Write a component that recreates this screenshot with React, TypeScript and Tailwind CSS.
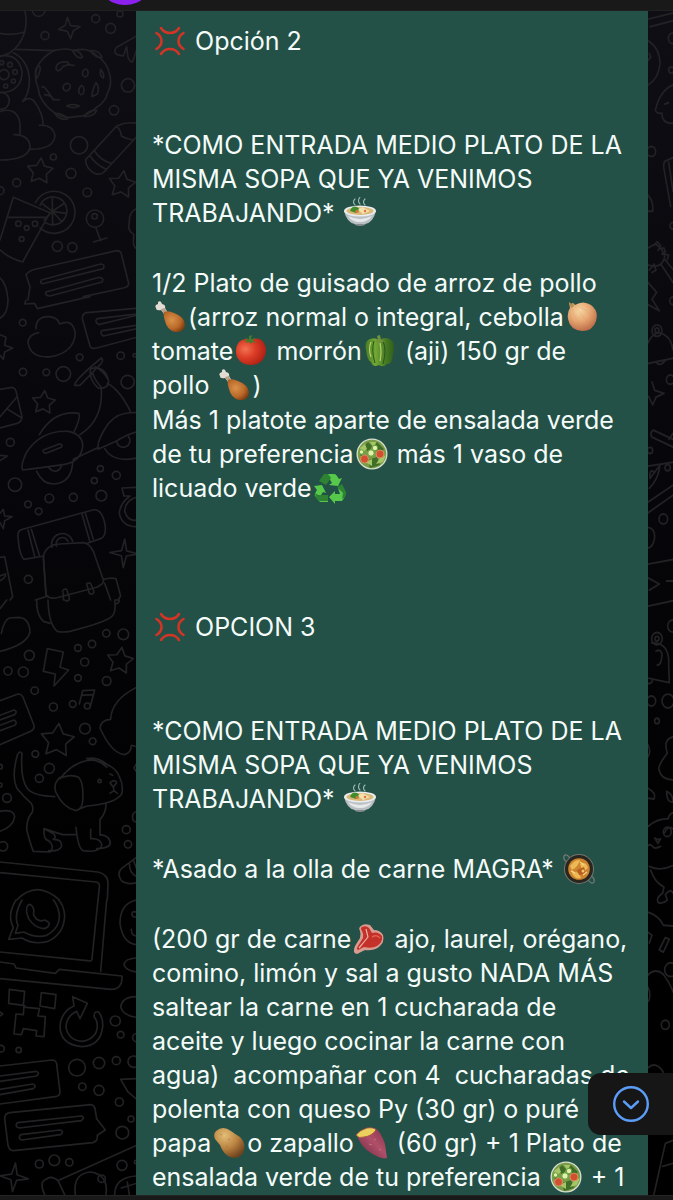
import type { ReactNode } from "react";

type Circle = [number, number, number];

function star(cx: number, cy: number, r: number, turn = 0, points = 5, inner = 0.52) {
  const out: string[] = [];
  for (let i = 0; i < points * 2; i++) {
    const radius = i % 2 === 0 ? r : r * inner;
    const a = ((turn - 90 + (i * 180) / points) * Math.PI) / 180;
    out.push(`${(cx + radius * Math.cos(a)).toFixed(1)} ${(cy + radius * Math.sin(a)).toFixed(1)}`);
  }
  return `M${out.join("L")}Z`;
}

function Doodles({ place, paths, circles }: { place: string; paths: string[]; circles: Circle[] }) {
  return (
    <g transform={place}>
      {paths.map((d, i) => (
        <path key={i} d={d} />
      ))}
      {circles.map(([x, y, r], i) => (
        <circle key={i} cx={x} cy={y} r={r} />
      ))}
    </g>
  );
}

const leftSections: { place: string; paths: string[]; circles: Circle[] }[] = [
  {
    place: "translate(0 -11) scale(.3333)",
    paths: [
      "M74 30C86 78 72 130 30 158L0 170M0 100Q35 108 75 96",
      "M45 148Q100 150 165 152M40 158Q84 180 88 236Q90 280 68 304Q92 284 108 312Q128 340 130 376M118 376Q160 374 165 408Q160 448 92 448M0 335Q50 318 60 370L60 402M42 404Q90 404 90 444Q80 480 0 480",
      "M0 168Q56 160 66 215Q66 265 20 276L0 278M0 276Q28 280 28 304Q24 328 0 328",
      "M112 200Q126 172 160 152Q200 142 222 152Q262 140 290 166Q322 188 328 220Q338 252 322 280Q318 304 290 322Q262 350 226 350Q190 358 160 336Q118 306 114 262Q100 230 112 200",
      "M110 236Q100 210 116 196Q128 204 110 236M270 152Q296 148 306 172Q290 176 270 152M218 152Q236 146 248 172Q232 180 218 152M168 206Q168 184 204 186Q212 194 188 200Q180 214 172 212ZM202 194L222 196M126 262Q130 250 160 300M134 284Q158 288 160 298L178 300M200 318Q218 310 238 318Q220 328 200 318M164 340Q190 340 204 356Q180 364 164 340M252 350Q266 328 290 332Q282 350 252 350M288 248Q300 262 292 282L276 290Q276 270 288 248",
      "M256 207Q266 208 264 224Q256 236 248 226Q246 210 256 207M302 208Q314 220 310 234Q298 228 302 208M200 250Q214 250 210 264Q200 280 190 268Q186 256 200 250M244 256Q256 262 250 280Q242 290 236 276Q236 262 244 256",
      "M202 52L212 77L240 80L220 92L212 116L202 94L176 88L196 76Z",
      "M410 108L350 142Q338 156 352 164L370 168L380 140L384 172Q392 190 398 184L410 150",
      "M258 478L350 378Q380 364 410 370M258 478Q254 500 280 518Q300 528 312 516L410 410M272 470Q290 496 320 508M284 454Q302 482 334 490M350 380Q362 388 364 408Q380 418 400 420",
      star(120, 514, 40, 5), star(366, 554, 42, 8),
      "M40 592L150 638L68 786Q28 776 0 750M40 592L0 720M24 652H142",
      "M106 608A63 63 0 1 1 120 684M120 616A42 42 0 1 1 136 668M157 596V634L190 612M157 634L198 640M157 634L184 664M157 634L158 674M157 634L132 660M157 634L128 612",
      "M288 684L302 722M280 726L320 714",
      "M410 626Q386 636 388 668Q380 690 402 704Q396 740 410 746",
      "M84 900L90 860L78 824Q88 812 106 808L350 752Q362 752 364 762L386 850Q386 862 370 864L250 890M124 840L302 792Q316 792 310 806L134 850Q118 854 124 840M138 876L298 832Q314 834 306 846L150 888Q134 888 138 876M0 834Q20 850 24 900",
    ],
    circles: [[116, 30, 19], [287, 56, 12], [332, 85, 15], [135, 107, 12], [360, 42, 9], [12, 224, 15], [5, 188, 6], [30, 194, 7], [45, 216, 7], [40, 243, 6], [17, 258, 6], [384, 256, 20], [342, 331, 14], [237, 436, 26], [160, 471, 9], [213, 520, 15], [262, 577, 13], [50, 548, 12], [0, 572, 12], [55, 671, 8], [80, 684, 7], [105, 671, 8], [65, 717, 7], [285, 656, 26], [284, 649, 8], [172, 739, 15], [217, 742, 14]],
  },
  {
    place: "translate(0 289) scale(.3333)",
    paths: [
      "M0 55Q24 40 24 0M78 0L74 12L104 10L112 26L270 -10",
      "M410 25L260 38Q244 42 248 60L270 138Q272 148 290 144L410 112M410 42L292 56Q282 64 296 74L410 46M410 76L306 92Q298 100 310 108L410 86",
      "M108 86Q108 48 148 50Q176 54 178 72Q220 54 226 102Q220 158 154 170Q90 176 84 126Q88 102 116 98",
      "M0 104L18 112L14 136L38 144L14 156L10 178L0 166M0 268L36 262Q48 264 50 282L66 350Q66 364 52 370L0 384M0 350L50 292M20 326L62 352",
      star(131, 308, 36, 5),
      "M224 256Q222 242 304 174Q312 180 302 192L240 256ZM272 206Q264 234 294 264Q324 268 326 244Q316 194 272 206M286 200Q312 214 324 238M278 220Q286 244 306 264",
      "M304 266Q310 360 240 404M322 250Q360 270 392 336M118 404Q162 330 236 340Q244 348 222 396M68 510Q60 500 78 460Q120 390 206 394Q250 404 248 440Q242 486 190 494Q120 504 68 510M130 450L178 432Q190 432 184 442L138 460Q128 460 130 450M220 478L296 442M110 514Q128 552 160 552Q216 550 218 484M146 502Q154 514 168 514Q184 508 184 494",
      "M294 448Q290 420 326 370Q356 334 410 338M294 448L348 424Q380 404 410 396M314 446Q340 490 410 474M350 424A20 20 0 1 0 386 410",
      "M72 778Q58 766 54 710Q52 690 68 688L278 630Q308 624 316 680Q318 710 302 716L262 730M72 778L132 768M84 690L104 770M94 688L118 766M246 642L270 726M256 640L280 718",
      "M156 742A30 30 0 0 1 218 724M170 738A18 18 0 0 1 204 724M130 768Q138 734 180 732L250 728Q268 730 280 754L310 840Q314 850 290 862L168 894Q138 896 138 880ZM310 838L332 834L348 836L362 888L354 900M314 850L332 900M106 900L144 888",
      "M188 876Q188 866 200 868L208 892V900M190 880L190 900M260 852Q262 848 272 850L282 876Q278 886 268 880ZM130 770L138 888",
      star(372, 760, 43, 3, 4, 0.25),
      "M410 562L366 564L372 588L390 588Q360 610 358 640Q366 680 410 680M410 592Q376 600 374 634Q384 666 410 660",
      "M0 466L22 468L0 482M0 640L10 628L14 648L36 650L14 662L10 686L0 668M0 772L14 770L38 890L30 900M0 828L16 822Q20 832 0 842",
    ],
    circles: [[68, 68, 10], [239, 172, 10], [362, 167, 11], [69, 216, 11], [139, 217, 10], [190, 222, 22], [383, 246, 20], [404, 166, 5], [31, 427, 12], [45, 554, 20], [301, 506, 9], [349, 526, 12], [283, 542, 9], [148, 595, 13], [220, 592, 12], [304, 587, 16], [84, 613, 10], [116, 634, 10], [85, 838, 12]],
  },
  {
    place: "translate(0 589) scale(.3333)",
    paths: [
      "M110 0Q108 42 130 64L150 70M144 0Q146 74 172 94Q186 98 210 94Q330 64 340 44Q348 30 344 0M344 0L358 0Q358 10 346 12M194 0Q200 6 206 0",
      "M0 26L20 0M0 154Q82 134 90 96Q88 54 56 52L28 54Q12 60 4 100",
      "M142 146L190 156L180 202L206 210L162 258L166 222L130 214Z",
      star(360, 183, 41, 8), star(172, 422, 52, 5),
      "M0 302L54 282Q66 282 70 294L102 376Q104 388 92 394L0 434M0 346L42 330Q54 334 44 344L0 360M0 376L42 360Q54 368 44 376L0 392",
      "M238 312L248 272L284 270L272 316M244 286L280 284",
      "M410 262Q334 300 332 358Q302 360 300 384Q334 460 374 464Q394 458 394 436L410 440M410 490L402 504L410 516",
      "M52 466Q58 450 66 460Q60 540 84 568Q102 588 164 590M52 466Q34 530 50 564Q72 592 94 610Q102 624 96 638Q80 656 80 688Q90 730 100 754L150 756Q166 740 146 722Q130 720 132 686L188 704H226M132 686L162 702Q170 712 160 718Q188 718 184 740Q176 756 146 752",
      "M180 536Q224 480 280 480Q346 494 358 530Q370 552 366 580Q350 610 262 618L240 626M180 532Q158 552 168 578Q190 624 228 632Q246 628 248 604Q252 550 236 532Q214 522 188 532ZM260 476Q296 468 326 498M270 478Q304 482 320 502",
      "M228 682Q234 746 250 752Q300 760 306 734Q300 714 272 716V688M318 612Q318 640 300 658V706M300 704Q334 708 330 734Q320 746 290 746",
      "M330 548Q346 536 350 548L340 562ZM340 562L342 572L330 580M342 572L352 580M330 522L338 526",
      "M0 634Q40 626 44 650Q40 680 0 694M0 786L294 816Q326 824 324 852L322 900M0 818L288 846Q300 848 298 862L294 900M50 900Q110 838 178 900",
      "M410 772L364 806Q350 820 364 842Q382 856 410 848M388 790Q388 820 410 830M400 780L410 806M410 634Q392 640 400 662L410 668",
    ],
    circles: [[319, 100, 11], [370, 103, 16], [276, 132, 11], [234, 144, 10], [88, 166, 15], [254, 186, 12], [24, 213, 12], [70, 216, 15], [234, 234, 10], [320, 243, 13], [104, 272, 11], [160, 321, 12], [218, 312, 10], [262, 318, 9], [255, 386, 16], [278, 424, 10], [106, 462, 10], [148, 505, 15], [118, 535, 12], [299, 543, 5], [21, 594, 13], [379, 689, 12], [384, 733, 11], [9, 739, 14], [0, 500, 7], [0, 555, 6]],
  },
  {
    place: "translate(0 889) scale(.3333)",
    paths: [
      "M48 0Q20 46 40 82L26 118L66 114Q100 136 144 124Q192 102 194 48Q192 16 176 0M66 0Q40 46 54 76L46 100L72 96Q108 116 140 106Q180 84 178 44Q174 16 160 0",
      "M84 16Q92 8 100 24L102 36Q96 42 110 58Q120 64 128 62Q136 56 148 70Q146 84 130 86Q104 84 86 56Q74 28 84 16Z",
      "M294 0L276 176Q276 186 262 182L0 156M320 0L302 214M0 186L42 192L48 204L166 220L178 208L366 228Q368 268 334 268L0 236",
      "M28 268L74 274L70 316L26 310ZM124 278L168 284L164 326L120 318ZM72 316L78 322L118 326L114 348L136 350L132 410L108 408L110 392L70 386L64 404L42 402L48 342L70 344Z",
      "M218 290L262 310L240 356L230 334Q198 350 198 382Q206 422 248 424Q292 416 292 376Q290 358 282 350Q282 332 296 336Q310 354 308 380Q302 438 246 440Q180 434 180 378Q184 334 222 318Z",
      "M0 498L156 480Q168 480 170 492L180 576Q180 588 166 590L0 612M0 528L108 514Q122 518 110 528L0 544M0 568L98 552Q112 556 100 566L0 584",
      "M30 638L272 614Q284 614 286 632L290 656L316 690L292 706Q294 724 278 728L40 752Q28 752 24 736L14 656Q14 640 30 638M52 668L244 648Q256 652 244 662L58 684Q42 680 52 668M62 704L180 690Q194 694 182 704L66 720Q52 716 62 704",
      star(42, 832, 43, 6, 4, 0.28),
      "M410 736L178 840M134 884Q116 846 138 838Q154 824 174 842L194 884M226 884Q218 820 272 816Q326 824 318 884M344 884Q344 832 410 828M364 864L410 850M382 846L388 884",
      "M410 0Q360 10 360 70Q368 130 410 134M410 174Q374 176 372 194Q378 212 410 216M410 290Q366 290 362 322Q370 348 410 352M410 536L362 538L384 576L410 598M394 88Q394 108 410 108M0 336L8 342L0 348",
    ],
    circles: [[404, 43, 8], [346, 363, 15], [362, 404, 10], [410, 413, 12], [3, 446, 10], [56, 450, 8], [231, 503, 25], [297, 489, 17], [349, 482, 12], [401, 485, 17], [247, 560, 11], [297, 571, 15], [358, 606, 12], [393, 657, 9], [367, 698, 19], [163, 781, 16], [118, 792, 12], [208, 787, 11], [305, 836, 11], [366, 796, 15], [408, 786, 5]],
  },
];

const rightSections: { place: string; paths: string[]; circles: Circle[] }[] = [
  {
    place: "translate(-88 -11) scale(.3333 .3827)",
    paths: [
      "M264 50L339 34M270 70L339 54M264 106Q300 126 300 166Q296 206 264 222M268 140L272 150L264 158",
      "M339 222Q300 236 286 288Q290 298 306 296Q306 324 339 322M314 272L326 268M339 412L318 420Q308 424 312 442L332 540M326 424L339 500M264 510Q282 528 278 552H264",
      "M264 648L286 638Q310 650 314 672Q304 704 264 692M282 640L292 632L302 642L294 654M300 650L312 648L316 658L306 664M310 664L326 666L322 678M312 676L339 704M304 692L339 738M268 706L282 690L288 706L276 712",
      "M264 738L290 764L276 782L298 812L264 796M264 896Q278 868 302 870Q334 880 339 914M264 950L339 936M288 946Q300 960 316 942",
      "M276 998L284 1020L312 1028L288 1038L278 1058L266 1036M339 1148L280 1124Q268 1132 276 1142L339 1168M327 1148L339 1132M339 1208L264 1218M300 1214Q296 1252 268 1276M280 1232Q268 1226 270 1250L296 1220",
      "M339 1268L264 1312M339 1294L264 1340M264 1378Q284 1380 284 1404Q280 1430 264 1432M339 1462L264 1474M264 1510L298 1526L268 1542M320 1518H339",
    ],
    circles: [[339, 100, 14], [334, 183, 8], [274, 396, 13], [339, 590, 9], [339, 786, 10], [291, 864, 15], [291, 863, 6], [331, 992, 12], [270, 1177, 8], [323, 1222, 8], [310, 1356, 13]],
  },
  {
    place: "translate(-88 589) scale(.3333 .3827)",
    paths: [
      "M264 16L339 2M275 112Q330 110 326 170L328 216L264 204M278 206Q276 220 264 218M288 134Q302 126 306 142Q304 172 292 170",
      "M339 358Q308 364 322 400Q300 424 296 440Q302 470 339 470M264 378Q274 396 264 410M264 492Q290 504 282 520L264 518M320 500Q340 508 339 528Q320 530 320 500",
      "M264 592Q292 570 324 572Q328 558 339 556M314 608Q322 588 339 598M264 642Q270 636 278 644Q284 652 302 644M284 622Q294 628 302 624L294 636ZM268 696Q300 710 339 694M272 706Q284 738 312 750L308 766Q288 778 294 790Q308 796 322 784L316 770Q332 752 339 766",
      "M264 816Q296 824 310 850L339 852M264 868L276 876L268 896M316 882L328 886L310 920L298 914ZM264 980Q286 960 310 978Q330 1000 339 1024M264 1012Q274 1030 266 1048M264 1222Q290 1204 310 1234",
      "M280 1560L316 1420L339 1412M308 1480L339 1472",
    ],
    circles: [[291, 101, 16], [291, 101, 6], [339, 68, 16], [274, 264, 13], [324, 264, 18], [291, 316, 7], [322, 606, 12], [332, 966, 18], [316, 1110, 12]],
  },
];

function Wallpaper({ sections }: { sections: typeof leftSections }) {
  return (
    <svg aria-hidden="true" className="absolute inset-0 h-full w-full" fill="none" stroke="#222225" strokeWidth="5" strokeLinecap="round" strokeLinejoin="round">
      {sections.map((s, i) => (
        <Doodles key={i} {...s} />
      ))}
    </svg>
  );
}

function Emoji({ label, children }: { label: string; children: ReactNode }) {
  return (
    <svg role="img" aria-label={label} viewBox="0 0 34 32" className="inline-block h-8 w-9 align-[-7px]">
      {children}
    </svg>
  );
}

function Anger() {
  return (
    <Emoji label="Enojo">
      <g fill="none" stroke="#d23425" strokeWidth="2.6" strokeLinecap="round">
        <path d="M8 3Q11 8 17 8Q23 8 26 3" />
        <path d="M8 29Q11 24 17 24Q23 24 26 29" />
        <path d="M3.500 8Q8.500 11 8.500 16Q8.500 21 3.500 24" />
        <path d="M30.500 8Q25.500 11 25.500 16Q25.500 21 30.500 24" />
      </g>
    </Emoji>
  );
}

function Soup() {
  return (
    <Emoji label="Plato de sopa">
      <g fill="none" stroke="#9eb9b5" strokeWidth="1.1" strokeLinecap="round">
        <path d="M12 8Q9 5 12 2M17 7Q14 4 17 0M22 8Q19 5 22 2" />
      </g>
      <path d="M10 24H24L22 28Q17 30 12 28Z" fill="#858b90" />
      <path d="M1 14Q4 26 12 27H22Q30 26 33 14Z" fill="#b9bfc3" />
      <path d="M5 19Q17 25 29 19Q25 25 17 25Q9 25 5 19Z" fill="#e6e9ea" />
      <ellipse cx="17" cy="14" rx="16" ry="5.500" fill="#e9eced" />
      <ellipse cx="17" cy="14" rx="13.500" ry="3.900" fill="#d9b878" />
      <path d="M7 14Q9 8 14 10L18 13L13 16Z" fill="#438c2e" />
      <path d="M15 13Q18 8 23 12L27 14L20 17Z" fill="#f4dfad" />
      <circle cx="14" cy="14.500" r="1.500" fill="#e27931" />
      <circle cx="22" cy="14" r="1.200" fill="#df7036" />
    </Emoji>
  );
}

function Drumstick() {
  return (
    <Emoji label="Pata de pollo">
      <defs>
        <radialGradient id="drumstick" cx=".38" cy=".42" r=".7">
          <stop stopColor="#d9924a" />
          <stop offset=".6" stopColor="#b96828" />
          <stop offset="1" stopColor="#78370f" />
        </radialGradient>
      </defs>
      <path d="M5 1Q8-1 9 3Q13 4 12 7L15 12L12 14L8 9Q3 10 3 7Q1 4 5 3Z" fill="#e3dcd4" />
      <path d="M8 8L12 7L14 12L11 13Z" fill="#b9a08b" />
      <path d="M11 11Q15 9 21 12Q32 16 32 24Q31 32 22 31Q14 29 12 20Q10 14 11 11Z" fill="url(#drumstick)" />
    </Emoji>
  );
}

function Onion() {
  return (
    <Emoji label="Cebolla">
      <defs>
        <radialGradient id="onion" cx=".4" cy=".3" r=".75">
          <stop stopColor="#f7d8a4" />
          <stop offset=".5" stopColor="#e6a672" />
          <stop offset="1" stopColor="#b96543" />
        </radialGradient>
      </defs>
      <path d="M4 1L6 3L8 2L10 4Q18-1 26 4Q34 10 31 20Q28 30 17 30Q5 29 3 18Q2 11 5 7Z" fill="url(#onion)" />
      <g fill="none" stroke="#d39560" strokeWidth=".5" opacity=".5">
        <path d="M6 5Q3 18 14 29M7 4Q9 20 20 29M8 4Q19 14 25 27M9 4Q24 8 30 20" />
      </g>
      <path d="M4 1L6 3L8 2L9 5L6 7Z" fill="#b58e50" />
    </Emoji>
  );
}

function Tomato() {
  return (
    <Emoji label="Tomate">
      <defs>
        <radialGradient id="tomato" cx=".32" cy=".4" r=".75">
          <stop stopColor="#f17251" />
          <stop offset=".45" stopColor="#dc3c25" />
          <stop offset="1" stopColor="#a51c12" />
        </radialGradient>
      </defs>
      <path d="M17 5Q25 1 30 8Q34 15 30 23Q26 30 17 30Q7 30 3 22Q0 13 5 7Q10 2 17 5Z" fill="url(#tomato)" />
      <path d="M15 5L11 2L13 5L8 6L13 6L11 8L15 7L17 9L18 7L22 8L19 5L22 3L17 4L18 0L15 1Z" fill="#477b2b" />
    </Emoji>
  );
}

function Pepper() {
  return (
    <Emoji label="Morrón">
      <defs>
        <linearGradient id="pepper">
          <stop stopColor="#4a7d22" />
          <stop offset=".35" stopColor="#72a735" />
          <stop offset=".7" stopColor="#477b24" />
          <stop offset="1" stopColor="#315e1b" />
        </linearGradient>
      </defs>
      <path d="M16 5Q23 1 28 5Q33 8 30 19Q29 30 24 29Q20 33 16 30Q10 33 8 27Q4 25 3 15Q1 6 7 4Q12 2 16 5Z" fill="url(#pepper)" />
      <path d="M11 6Q8 15 12 28M20 6Q24 15 20 29" fill="none" stroke="#28551a" strokeWidth="1" />
      <path d="M8 7Q5 14 8 22M17 8Q19 17 17 26" fill="none" stroke="#b5cd71" strokeWidth="1.200" />
      <path d="M12 6L15 5L14 1L17 0L18 5L22 6L17 8Z" fill="#72913d" />
    </Emoji>
  );
}

function Salad() {
  return (
    <Emoji label="Ensalada">
      <circle cx="17" cy="16" r="15.500" fill="#d7ded0" />
      <circle cx="17" cy="16" r="14.200" fill="#789c47" />
      <g fill="#406e28">
        <path d="M8 9L13 4L17 8L14 14ZM22 4L29 11L24 17L18 10ZM5 16L12 18L9 25ZM13 22L22 19L25 27L15 30Z" />
      </g>
      <g fill="#a6c566">
        <path d="M5 10L10 6L12 11L7 15ZM15 4L21 4L19 10ZM25 20L31 17L28 24L21 26ZM10 24L17 21L17 28Z" />
      </g>
      <g fill="#d1502f" stroke="#eb9c76" strokeWidth=".7">
        <circle cx="9.500" cy="21" r="4" />
        <circle cx="25" cy="16" r="4" />
      </g>
      <g fill="#e3efae" stroke="#68a53b" strokeWidth="1">
        <circle cx="16" cy="15" r="3.200" />
        <circle cx="20" cy="10" r="2.700" />
        <circle cx="6.500" cy="14" r="2.200" />
      </g>
    </Emoji>
  );
}

function Recycle() {
  return (
    <Emoji label="Reciclaje">
      <g fill="#56c94b">
        <path d="M12 2H21Q23 2 24 4L26 7L29 6L25 14L16 13L19 11L16 6Z" />
        <path d="M25 16L31 20Q33 23 31 26L29 29H22V32L16 25L22 19V22H27Z" />
        <path d="M1 14L9 13L13 21L10 20L8 23H15V30H7L2 24Q1 22 4 18Z" />
      </g>
      <g fill="#2d8233">
        <path d="M11 2H15L18 6L13 13L6 9Z" />
        <path d="M24 15L29 12L33 20Q34 24 29 27L30 21Z" />
        <path d="M2 21L5 23H15V29H7Q4 28 3 26Z" />
      </g>
    </Emoji>
  );
}

function Stew() {
  return (
    <Emoji label="Olla de comida">
      <g fill="none" stroke="#777c7a" strokeWidth="1.200">
        <path d="M8 5Q4 0 2 3Q1 7 5 9M26 27Q30 32 32 29Q33 25 29 23" />
      </g>
      <circle cx="17" cy="16" r="15" fill="#74766f" />
      <circle cx="17" cy="16" r="14" fill="#2b251f" />
      <circle cx="17" cy="16" r="10.800" fill="#cc842f" />
      <path d="M8 13Q13 6 18 7Q16 14 10 17ZM18 11Q24 8 26 15L21 19ZM10 20Q17 17 19 25Q13 27 10 20Z" fill="#edb955" />
      <path d="M15 17L22 14L24 21L17 22Z" fill="#b65e22" />
      <path d="M18 9L22 12M21 22L25 19M9 18L13 20" stroke="#f6d37f" strokeWidth="1.500" />
      <circle cx="21" cy="18" r="1.500" fill="#f2c86a" />
    </Emoji>
  );
}

function Steak() {
  return (
    <Emoji label="Carne">
      <path d="M9 3Q12 0 18 2L22 7Q28 7 31 12Q33 19 27 24Q21 28 13 27L5 31Q0 30 3 23L8 15Q9 11 8 8Q6 5 9 3Z" fill="#d99b90" />
      <path d="M10 4Q14 2 17 5L20 10Q26 8 30 13Q31 19 25 23Q20 26 12 24L6 27Q4 26 6 23L11 15Q12 11 10 8Q8 5 10 4Z" fill="#c4312a" />
      <path d="M14 6L16 14Q12 19 7 25" fill="none" stroke="#eeb5a4" strokeWidth="1.200" />
      <path d="M20 14Q25 11 28 15" fill="none" stroke="#e1624d" strokeWidth="1.500" />
    </Emoji>
  );
}

function Potato() {
  return (
    <Emoji label="Papa">
      <defs>
        <radialGradient id="potato" cx=".35" cy=".25" r=".8">
          <stop stopColor="#e3be76" />
          <stop offset=".55" stopColor="#b98140" />
          <stop offset="1" stopColor="#70431e" />
        </radialGradient>
      </defs>
      <path d="M4 4Q11-2 19 4Q23 7 28 10Q35 17 31 26Q25 34 16 29Q11 26 8 18L3 12Q1 7 4 4Z" fill="url(#potato)" />
      <path d="M8 7L10 8M16 12L18 13M14 19L16 20M24 20L25 22" stroke="#9e6e36" strokeWidth=".6" />
    </Emoji>
  );
}

function SweetPotato() {
  return (
    <Emoji label="Batata">
      <defs>
        <linearGradient id="sweet" x1="0" x2="1" y1="1" y2="0">
          <stop stopColor="#65243e" />
          <stop offset=".55" stopColor="#b04f69" />
          <stop offset="1" stopColor="#833249" />
        </linearGradient>
      </defs>
      <path d="M2 9L20 1Q26 5 30 17L32 31Q27 33 16 26Q7 21 2 9Z" fill="url(#sweet)" />
      <path d="M1 8Q5 3 12 1Q19 0 21 3Q17 9 9 10Q4 12 1 8Z" fill="#ead05c" stroke="#a6473f" strokeWidth=".8" />
      <path d="M19 12L21 13M14 17L17 18M24 22L26 23" stroke="#d07a83" strokeWidth=".8" />
    </Emoji>
  );
}

function Starter() {
  return (
    <p>
      *COMO ENTRADA MEDIO PLATO DE LA
      <br />
      MISMA SOPA QUE YA VENIMOS
      <br />
      TRABAJANDO* <Soup />
    </p>
  );
}

export default function App() {
  return (
    <div className="relative flex min-h-screen flex-col overflow-hidden bg-[#191919] font-['Inter',sans-serif]">
      <header className="relative h-[11px] overflow-hidden border-b border-[#202020] bg-[#191919]">
        <span className="absolute -top-[55px] left-[95px] size-[60px] rounded-full bg-[#8c20ee]" />
      </header>

      <main className="grid grow grid-cols-[136px_minmax(0,1fr)_25px] bg-linear-to-b from-[#0f0e14] via-[#050508] to-black">
        <div className="relative overflow-hidden">
          <Wallpaper sections={leftSections} />
        </div>

        <article className="bg-[#235147] pt-[13px] pl-4 text-[25px] leading-[34px] whitespace-nowrap text-[#f4fbf9]">
          <p>
            <Anger /> Opción 2
          </p>
          <div className="mt-[70px]">
            <Starter />
          </div>
          <p className="mt-9">
            1/2 Plato de guisado de arroz de pollo
            <br />
            <Drumstick />
            (arroz normal o integral, cebolla
            <Onion />
            <br />
            tomate
            <Tomato /> morrón
            <Pepper /> (aji) 150 gr de
            <br />
            pollo <Drumstick />)
          </p>
          <p className="mt-px">
            Más 1 platote aparte de ensalada verde
            <br />
            de tu preferencia
            <Salad /> más 1 vaso de
            <br />
            licuado verde
            <Recycle />
          </p>
          <p className="mt-[105px]">
            <Anger /> OPCION 3
          </p>
          <div className="mt-[70px]">
            <Starter />
          </div>
          <p className="mt-9">
            *Asado a la olla de carne MAGRA* <Stew />
          </p>
          <p className="mt-9">
            (200 gr de carne
            <Steak /> ajo, laurel, orégano,
            <br />
            comino, limón y sal a gusto NADA MÁS
            <br />
            saltear la carne en 1 cucharada de
            <br />
            aceite y luego cocinar la carne con
            <br />
            agua)&nbsp; acompañar con 4&nbsp; cucharadas de
            <br />
            polenta con queso Py (30 gr) o puré
            <br />
            papa
            <Potato />o zapallo
            <SweetPotato /> (60 gr) + 1 Plato de
            <br />
            ensalada verde de tu preferencia <Salad /> + 1
          </p>
        </article>

        <div className="relative overflow-hidden">
          <Wallpaper sections={rightSections} />
        </div>
      </main>

      <footer className="h-[5px] border-t border-[#242424] bg-[#191919]" />

      <button type="button" aria-label="Ir al final" className="absolute right-0 bottom-[65px] flex h-[62px] w-[85px] items-center justify-center rounded-l-[13px] bg-[#161616]">
        <svg viewBox="0 0 38 38" className="size-[38px]" fill="none" stroke="#5b9df6" strokeWidth="2.400" strokeLinecap="round" strokeLinejoin="round">
          <circle cx="19" cy="19" r="16.800" />
          <path d="M12 16.500L19 23L26 16.500" />
        </svg>
      </button>
    </div>
  );
}
